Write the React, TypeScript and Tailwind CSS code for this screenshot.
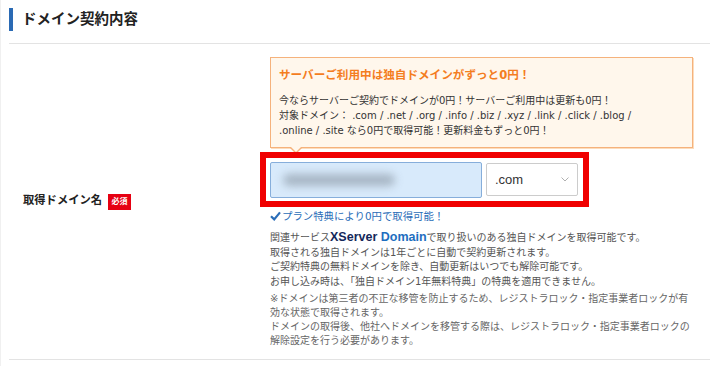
import React from "react";

export default function App() {
  const jp = { fontFamily: '"DejaVu Sans", "Noto Sans CJK JP", "Noto Sans", sans-serif' } as React.CSSProperties;
  return (
    <div
      className="w-[710px] h-[366px] bg-white border-l border-[#f0f0f0] overflow-hidden text-[#333]"
      style={jp}
    >
      <div className="ml-2">
        {/* Header */}
        <div className="h-[44px] pt-[8px] border-b border-[#e3e3e3] flex items-start">
          <div className="w-[4px] h-[23px] bg-[#2a6ab4]" />
          <div className="ml-[9px] text-[14.5px] leading-[23px] font-bold text-[#222]">
            ドメイン契約内容
          </div>
        </div>

        {/* Row */}
        <div className="flex h-[316px] border-b border-[#e3e3e3]">
          <div className="w-[261px] flex items-center pl-[14px]">
            <span className="text-[11.3px] font-bold text-[#222]">取得ドメイン名</span>
            <span className="ml-[6px] w-[23px] h-[16px] bg-[#e60012] text-white text-[8px] font-bold flex items-center justify-center">
              必須
            </span>
          </div>

          <div className="pt-[13px] flex flex-col">
            {/* Orange notice */}
            <div className="relative w-[423px] h-[91px] bg-[#fff7ec] border border-[#f5b27c] shadow-[1px_1px_0_#fcdcbc] pl-[8px] pt-[8px]">
              <div className="text-[11.6px] leading-[18px] font-bold text-[#f47d1e] whitespace-nowrap">
                サーバーご利用中は独自ドメインがずっと0円！
              </div>
              <div className="mt-[9px] text-[10px] leading-[15px] text-[#333] whitespace-nowrap">
                今ならサーバーご契約でドメインが0円！サーバーご利用中は更新も0円！
                <br />
                対象ドメイン： .com / .net / .org / .info / .biz / .xyz / .link / .click / .blog /
                <br />
                .online / .site なら0円で取得可能！更新料金もずっと0円！
              </div>
              {/* Arrow */}
              <div className="absolute left-[18px] bottom-[-7px] w-0 h-0 border-l-[7px] border-r-[7px] border-t-[7px] border-l-transparent border-r-transparent border-t-[#f5b27c]" />
              <div className="absolute left-[19px] bottom-[-5px] w-0 h-0 border-l-[6px] border-r-[6px] border-t-[6px] border-l-transparent border-r-transparent border-t-[#fff7ec]" />
            </div>

            {/* Red highlighted input area */}
            <div className="relative mt-[4px] ml-[-10px] w-[329px] h-[55px] border-[6px] border-[#f00000] flex items-center pl-[4px] gap-[4px]">
              <div className="w-[212px] h-[36px] bg-[#d8eafb] border border-[#86aedb] rounded-[2px] flex items-center pl-[12px] overflow-hidden">
                <div className="w-[112px] h-[12px] rounded-full bg-[#9aa8b6] blur-[4px] opacity-80" />
              </div>
              <div className="w-[92px] h-[33px] bg-white border border-[#cccccc] rounded-[2px] flex items-center justify-between pl-[8px] pr-[8px]">
                <span className="text-[13px] text-[#333]" style={{ fontFamily: '"Liberation Sans", Arial, sans-serif' }}>
                  .com
                </span>
                <svg width="8" height="5" viewBox="0 0 8 5">
                  <polyline points="0.5,0.5 4,4 7.5,0.5" fill="none" stroke="#b0b0b0" strokeWidth="1" />
                </svg>
              </div>
            </div>

            {/* Check line */}
            <div className="mt-[2px] flex items-center text-[10.4px] leading-[14px] text-[#2a6db8] whitespace-nowrap">
              <svg width="11" height="10" viewBox="0 0 11 10" className="mr-[1px]">
                <path d="M1 5.2 L4.2 8.4 L10 1.4" fill="none" stroke="#2a6db8" strokeWidth="2.2" strokeLinejoin="miter" />
              </svg>
              プラン特典により0円で取得可能！
            </div>

            {/* Paragraph 1 */}
            <div className="mt-[7px] text-[10px] leading-[14.5px] text-[#555] whitespace-nowrap">
              <div className="flex items-baseline">
                関連サービス
                <span
                  className="font-bold text-[12.5px] leading-[14px]"
                  style={{ fontFamily: '"Liberation Sans", Arial, sans-serif' }}
                >
                  <span className="text-[#14285a]">XServer</span>{" "}
                  <span className="text-[#1e6ec0]">Domain</span>
                </span>
                で取り扱いのある独自ドメインを取得可能です。
              </div>
              取得される独自ドメインは1年ごとに自動で契約更新されます。
              <br />
              ご契約特典の無料ドメインを除き、自動更新はいつでも解除可能です。
              <br />
              お申し込み時は、「独自ドメイン1年無料特典」の特典を適用できません。
            </div>

            {/* Paragraph 2 */}
            <div className="mt-[3px] text-[10px] leading-[14px] text-[#666] whitespace-nowrap">
              ※ドメインは第三者の不正な移管を防止するため、レジストラロック・指定事業者ロックが有
              <br />
              効な状態で取得されます。
              <br />
              ドメインの取得後、他社へドメインを移管する際は、レジストラロック・指定事業者ロックの
              <br />
              解除設定を行う必要があります。
            </div>
          </div>
        </div>
      </div>
    </div>
  );
}
